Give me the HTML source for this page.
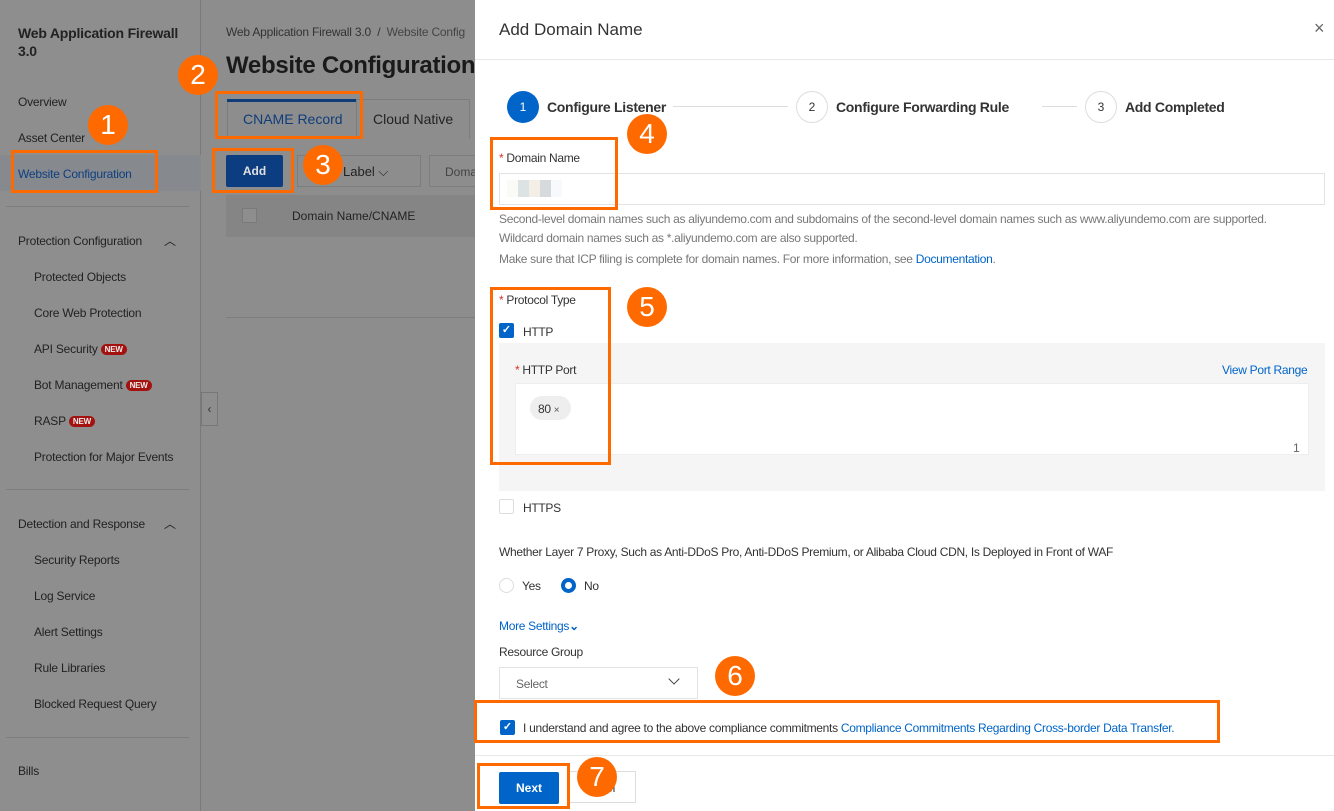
<!DOCTYPE html>
<html><head><meta charset="utf-8"><style>
*{box-sizing:border-box;margin:0;padding:0}
body{width:1334px;height:811px;overflow:hidden;position:relative;font-family:"Liberation Sans",sans-serif;background:#8d8d8d;color:#333}
.a{position:absolute;white-space:nowrap}
.side{left:0;top:0;width:201px;height:811px;background:#8e8e8e;border-right:1px solid #7a7a7a}
.sd{color:#222;font-size:12px;letter-spacing:-0.2px}
.hr{position:absolute;height:1px;background:#7d7d7d}
.ob{position:absolute;border:3px solid #ff6a00}
.oc{position:absolute;width:40px;height:40px;border-radius:50%;background:#ff6a00;color:#fff;font-size:28px;text-align:center;line-height:40px}
.new{display:inline-block;background:#a3120f;color:#eee;font-size:8px;font-weight:bold;border-radius:7px;padding:1px 4px;margin-left:3px;vertical-align:1px}
.panel{left:475px;top:0;width:859px;height:811px;background:#fff}
.t12{font-size:12px;letter-spacing:-0.3px}
.blue{color:#0064c8}
.cb{position:absolute;width:15px;height:15px;border-radius:2px}
</style></head><body>
<div class="a side"></div>
<div class="a sd" style="left:18px;top:24px;font-size:14px;font-weight:bold;line-height:18px;white-space:normal;width:170px">Web Application Firewall 3.0</div>
<div class="a sd" style="left:18px;top:95px">Overview</div>
<div class="a sd" style="left:18px;top:131px">Asset Center</div>
<div class="a" style="left:0;top:155px;width:201px;height:36px;background:#86898e"></div>
<div class="a sd" style="left:18px;top:167px;color:#0e3f80">Website Configuration</div>
<div class="hr" style="left:6px;top:206px;width:183px"></div>
<div class="a sd" style="left:18px;top:234px">Protection Configuration</div>
<div class="a sd" style="left:164px;top:232px;font-size:12px">︿</div>
<div class="a sd" style="left:34px;top:270px">Protected Objects</div>
<div class="a sd" style="left:34px;top:306px">Core Web Protection</div>
<div class="a sd" style="left:34px;top:342px">API Security<span class="new">NEW</span></div>
<div class="a sd" style="left:34px;top:378px">Bot Management<span class="new">NEW</span></div>
<div class="a sd" style="left:34px;top:414px">RASP<span class="new">NEW</span></div>
<div class="a sd" style="left:34px;top:450px">Protection for Major Events</div>
<div class="hr" style="left:6px;top:489px;width:183px"></div>
<div class="a sd" style="left:18px;top:517px">Detection and Response</div>
<div class="a sd" style="left:164px;top:515px">︿</div>
<div class="a sd" style="left:34px;top:553px">Security Reports</div>
<div class="a sd" style="left:34px;top:589px">Log Service</div>
<div class="a sd" style="left:34px;top:625px">Alert Settings</div>
<div class="a sd" style="left:34px;top:661px">Rule Libraries</div>
<div class="a sd" style="left:34px;top:697px">Blocked Request Query</div>
<div class="hr" style="left:6px;top:737px;width:183px"></div>
<div class="a sd" style="left:18px;top:764px">Bills</div>
<div class="a" style="left:201px;top:392px;width:17px;height:34px;background:#8e8e8e;border:1px solid #777;color:#333;font-size:12px;line-height:32px;text-align:center">‹</div>

<div class="a sd" style="left:226px;top:25px;color:#333">Web Application Firewall 3.0 &nbsp;/&nbsp; <span style="color:#444">Website Config</span></div>
<div class="a" style="left:226px;top:52px;font-size:24px;font-weight:bold;color:#1a1a1a;letter-spacing:-0.3px">Website Configuration</div>
<div class="a" style="left:227px;top:99px;width:243px;height:40px;border:1px solid #7d7d7d;border-bottom:none"></div>
<div class="a" style="left:227px;top:99px;width:129px;height:3px;background:#0f3d7a"></div>
<div class="a" style="left:356px;top:99px;width:1px;height:40px;background:#7d7d7d"></div>
<div class="a" style="left:243px;top:111px;font-size:14px;color:#0f3d7a">CNAME Record</div>
<div class="a" style="left:373px;top:111px;font-size:14px;color:#222">Cloud Native</div>
<div class="a" style="left:226px;top:155px;width:57px;height:32px;background:#0b3d80;border-radius:2px;color:#e0e0e0;font-size:12px;font-weight:bold;text-align:center;line-height:32px">Add</div>
<div class="a" style="left:297px;top:155px;width:124px;height:32px;border:1px solid #7d7d7d"></div>
<div class="a" style="left:343px;top:164px;font-size:13px;color:#222">Label ⌵</div>
<div class="a" style="left:429px;top:155px;width:50px;height:32px;border:1px solid #7d7d7d;font-size:12px;color:#444;padding:9px 15px">Doma</div>
<div class="a" style="left:226px;top:195px;width:250px;height:42px;background:#858585"></div>
<div class="a" style="left:242px;top:208px;width:15px;height:15px;border:1px solid #7a7a7a;background:#8e8e8e"></div>
<div class="a" style="left:292px;top:209px;font-size:12px;color:#222">Domain Name/CNAME</div>
<div class="hr" style="left:226px;top:317px;width:250px"></div>

<div class="a panel"></div>
<div class="a" style="left:499px;top:20px;font-size:17px;color:#333">Add Domain Name</div>
<div class="a" style="left:1314px;top:18px;font-size:18px;color:#666">×</div>
<div class="hr" style="left:475px;top:59px;width:859px;background:#e8e8e8"></div>

<div class="a" style="left:507px;top:91px;width:32px;height:32px;border-radius:50%;background:#0064c8;color:#fff;font-size:12px;text-align:center;line-height:32px">1</div>
<div class="a" style="left:547px;top:99px;font-size:14px;color:#333;font-weight:bold;letter-spacing:-0.3px">Configure Listener</div>
<div class="hr" style="left:673px;top:106px;width:115px;background:#ddd"></div>
<div class="a" style="left:796px;top:91px;width:32px;height:32px;border-radius:50%;border:1px solid #ddd;color:#333;font-size:12px;text-align:center;line-height:30px">2</div>
<div class="a" style="left:836px;top:99px;font-size:14px;color:#333;font-weight:bold;letter-spacing:-0.3px">Configure Forwarding Rule</div>
<div class="hr" style="left:1042px;top:106px;width:35px;background:#ddd"></div>
<div class="a" style="left:1085px;top:91px;width:32px;height:32px;border-radius:50%;border:1px solid #ddd;color:#333;font-size:12px;text-align:center;line-height:30px">3</div>
<div class="a" style="left:1125px;top:99px;font-size:14px;color:#333;font-weight:bold;letter-spacing:-0.3px">Add Completed</div>

<div class="a t12" style="left:499px;top:151px"><span style="color:#d93026">*</span> Domain Name</div>
<div class="a" style="left:499px;top:173px;width:826px;height:32px;border:1px solid #e3e3e3"></div>
<div class="a" style="left:507px;top:180px;width:11px;height:17px;background:#fafaf7"></div>
<div class="a" style="left:518px;top:180px;width:11px;height:17px;background:#dde2e3"></div>
<div class="a" style="left:529px;top:180px;width:11px;height:17px;background:#f3efe7"></div>
<div class="a" style="left:540px;top:180px;width:11px;height:17px;background:#d6dadc"></div>
<div class="a" style="left:551px;top:180px;width:11px;height:17px;background:#f7f9fc"></div>
<div class="a t12" style="left:499px;top:212px;color:#777">Second-level domain names such as aliyundemo.com and subdomains of the second-level domain names such as www.aliyundemo.com are supported.</div>
<div class="a t12" style="left:499px;top:231px;color:#777">Wildcard domain names such as *.aliyundemo.com are also supported.</div>
<div class="a t12" style="left:499px;top:252px;color:#777">Make sure that ICP filing is complete for domain names. For more information, see <span class="blue">Documentation</span>.</div>

<div class="a t12" style="left:499px;top:293px"><span style="color:#d93026">*</span> Protocol Type</div>
<div class="cb" style="left:499px;top:323px;background:#0064c8;color:#fff;font-size:11px;text-align:center;line-height:15px;font-weight:bold">✓</div>
<div class="a t12" style="left:523px;top:325px">HTTP</div>
<div class="a" style="left:499px;top:343px;width:826px;height:148px;background:#f5f5f5"></div>
<div class="a t12" style="left:515px;top:363px"><span style="color:#d93026">*</span> HTTP Port</div>
<div class="a t12 blue" style="left:1222px;top:363px">View Port Range</div>
<div class="a" style="left:515px;top:383px;width:794px;height:72px;background:#fff;border:1px solid #eee"></div>
<div class="a t12" style="left:530px;top:396px;width:41px;height:24px;background:#eee;border-radius:12px;padding:6px 8px">80 <span style="font-size:10px;color:#555">×</span></div>
<div class="a t12" style="left:1293px;top:441px;color:#666">1</div>
<div class="cb" style="left:499px;top:499px;border:1px solid #ddd"></div>
<div class="a t12" style="left:523px;top:501px">HTTPS</div>

<div class="a t12" style="left:499px;top:545px">Whether Layer 7 Proxy, Such as Anti-DDoS Pro, Anti-DDoS Premium, or Alibaba Cloud CDN, Is Deployed in Front of WAF</div>
<div class="a" style="left:499px;top:578px;width:15px;height:15px;border-radius:50%;border:1px solid #ddd"></div>
<div class="a t12" style="left:522px;top:579px">Yes</div>
<div class="a" style="left:561px;top:578px;width:15px;height:15px;border-radius:50%;border:4px solid #0064c8"></div>
<div class="a t12" style="left:584px;top:579px">No</div>
<div class="a t12 blue" style="left:499px;top:619px">More Settings<b>⌄</b></div>
<div class="a t12" style="left:499px;top:645px">Resource Group</div>
<div class="a" style="left:499px;top:667px;width:199px;height:32px;border:1px solid #e3e3e3"></div>
<div class="a t12" style="left:516px;top:677px;color:#666">Select</div>
<div class="a" style="left:670px;top:675px;width:8px;height:8px;border-right:1.5px solid #444;border-bottom:1.5px solid #444;transform:rotate(45deg)"></div>

<div class="cb" style="left:500px;top:720px;background:#0064c8;color:#fff;font-size:11px;text-align:center;line-height:15px;font-weight:bold">✓</div>
<div class="a t12" style="left:523px;top:721px">I understand and agree to the above compliance commitments <span class="blue">Compliance Commitments Regarding Cross-border Data Transfer.</span></div>
<div class="hr" style="left:475px;top:755px;width:859px;background:#e8e8e8"></div>
<div class="a" style="left:569px;top:771px;width:67px;height:32px;border:1px solid #ddd;background:#fff;font-size:12px;padding:9px 0 0 36px">el</div>
<div class="a" style="left:499px;top:772px;width:60px;height:32px;background:#0064c8;border-radius:2px;color:#fff;font-size:12px;font-weight:bold;text-align:center;line-height:32px">Next</div>

<div class="ob" style="left:11px;top:150px;width:147px;height:43px"></div>
<div class="ob" style="left:215px;top:91px;width:148px;height:48px"></div>
<div class="ob" style="left:212px;top:148px;width:82px;height:45px"></div>
<div class="ob" style="left:490px;top:137px;width:128px;height:73px"></div>
<div class="ob" style="left:490px;top:287px;width:121px;height:178px"></div>
<div class="ob" style="left:474px;top:700px;width:746px;height:43px"></div>
<div class="ob" style="left:477px;top:763px;width:93px;height:46px"></div>
<div class="oc" style="left:88px;top:105px">1</div>
<div class="oc" style="left:178px;top:55px">2</div>
<div class="oc" style="left:303px;top:145px">3</div>
<div class="oc" style="left:627px;top:114px">4</div>
<div class="oc" style="left:627px;top:287px">5</div>
<div class="oc" style="left:715px;top:656px">6</div>
<div class="oc" style="left:577px;top:757px">7</div>
</body></html>
